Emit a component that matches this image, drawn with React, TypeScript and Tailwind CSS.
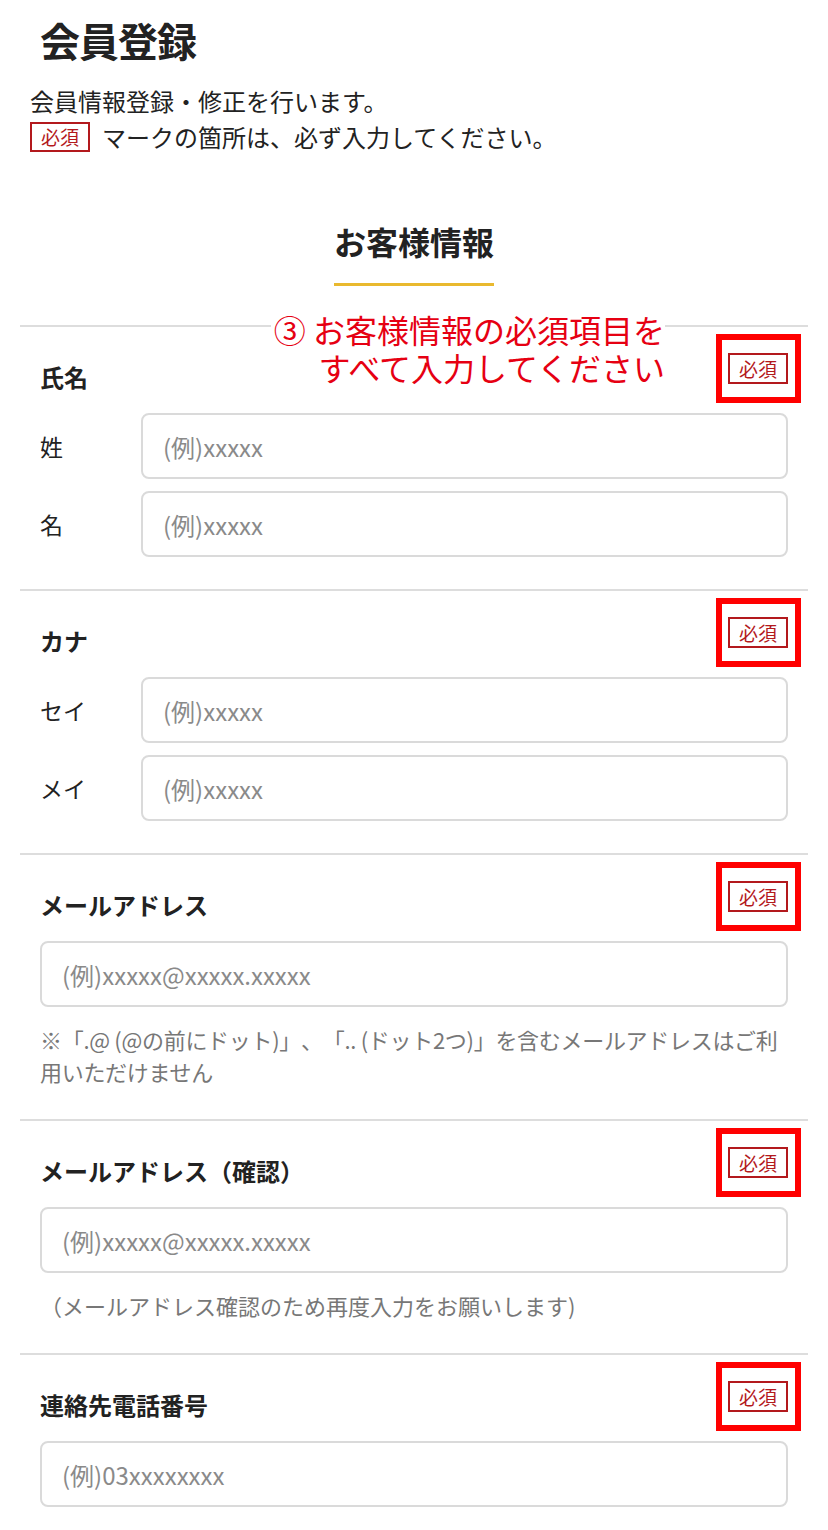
const FONT = "font-['Noto_Sans_CJK_JP','Noto_Sans',sans-serif]";

function Badge() {
  return (
    <div className="relative shrink-0">
      <span className="block w-[60px] h-[31px] border-2 border-[#b3191d] text-[#b3191d] text-[19px] leading-[27px] text-center">
        必須
      </span>
      {/* annotation frame */}
      <span className="absolute -left-[12px] -right-[13px] -top-[19px] -bottom-[19px] border-[6px] border-[#ff0000]" />
    </div>
  );
}

function TextInput({ placeholder }: { placeholder: string }) {
  return (
    <input
      type="text"
      placeholder={placeholder}
      className="w-full h-[66px] rounded-[8px] border-2 border-[#dadada] bg-white px-[20px] text-[24px] text-[#222] placeholder:text-[#8a8a8a] outline-none"
    />
  );
}

function SectionHeader({ title }: { title: string }) {
  return (
    <div className="flex justify-between items-start">
      <h3 className="mt-[8px] text-[24px] leading-[32px] font-bold text-[#222]">{title}</h3>
      <Badge />
    </div>
  );
}

function Section({ children, annotated }: { children: React.ReactNode; annotated?: boolean }) {
  return (
    <div className="relative border-t-2 border-[#dddddd] px-[20px] pt-[26px] pb-[32px]">
      {annotated && (
        <div className="absolute -top-[17px] right-[143px] bg-white pl-[3px] text-right text-[32px] leading-[38px] text-[#e60012]">
          <p>③ お客様情報の必須項目を</p>
          <p>すべて入力してください</p>
        </div>
      )}
      {children}
    </div>
  );
}

function NameRow({ label }: { label: string }) {
  return (
    <div className="flex items-center">
      <span className="w-[101px] shrink-0 text-[23px] text-[#222]">{label}</span>
      <TextInput placeholder="(例)xxxxx" />
    </div>
  );
}

export default function App() {
  return (
    <div className={`w-[828px] min-h-[1530px] bg-white text-[#222] [text-spacing-trim:space-all] ${FONT}`}>
      <div className="px-[30px]">
        <h1 className="pt-[16px] ml-[10px] text-[40px] leading-[48px] font-bold tracking-[-1px]">会員登録</h1>
        <div className="mt-[19px] text-[24px] leading-[36px]">
          <p>会員情報登録・修正を行います。</p>
          <p className="flex items-center">
            <span className="inline-block w-[60px] h-[30px] border-2 border-[#b3191d] text-[#b3191d] text-[19px] leading-[26px] text-center">
              必須
            </span>
            <span className="ml-[12px]">マークの箇所は、必ず入力してください。</span>
          </p>
        </div>
      </div>

      <div className="mt-[66px] flex flex-col items-center">
        <h2 className="text-[32px] leading-[40px] font-bold">お客様情報</h2>
        <div className="mt-[22px] w-[160px] h-[3px] bg-[#e9b92f]" />
      </div>

      <div className="mx-[20px] mt-[39px]">
        <Section annotated>
          <SectionHeader title="氏名" />
          <div className="mt-[20px] flex flex-col gap-[12px]">
            <NameRow label="姓" />
            <NameRow label="名" />
          </div>
        </Section>

        <Section>
          <SectionHeader title="カナ" />
          <div className="mt-[20px] flex flex-col gap-[12px]">
            <NameRow label="セイ" />
            <NameRow label="メイ" />
          </div>
        </Section>

        <Section>
          <SectionHeader title="メールアドレス" />
          <div className="mt-[20px]">
            <TextInput placeholder="(例)xxxxx@xxxxx.xxxxx" />
          </div>
          <p className="mt-[16px] text-[22px] leading-[32px] tracking-[-0.3px] text-[#777]">
            ※「.@ (@の前にドット)」、「.. (ドット2つ)」を含むメールアドレスはご利用いただけません
          </p>
        </Section>

        <Section>
          <SectionHeader title="メールアドレス（確認）" />
          <div className="mt-[20px]">
            <TextInput placeholder="(例)xxxxx@xxxxx.xxxxx" />
          </div>
          <p className="mt-[16px] text-[22px] leading-[32px] text-[#777]">
            （メールアドレス確認のため再度入力をお願いします)
          </p>
        </Section>

        <Section>
          <SectionHeader title="連絡先電話番号" />
          <div className="mt-[20px]">
            <TextInput placeholder="(例)03xxxxxxxx" />
          </div>
        </Section>
      </div>
    </div>
  );
}
